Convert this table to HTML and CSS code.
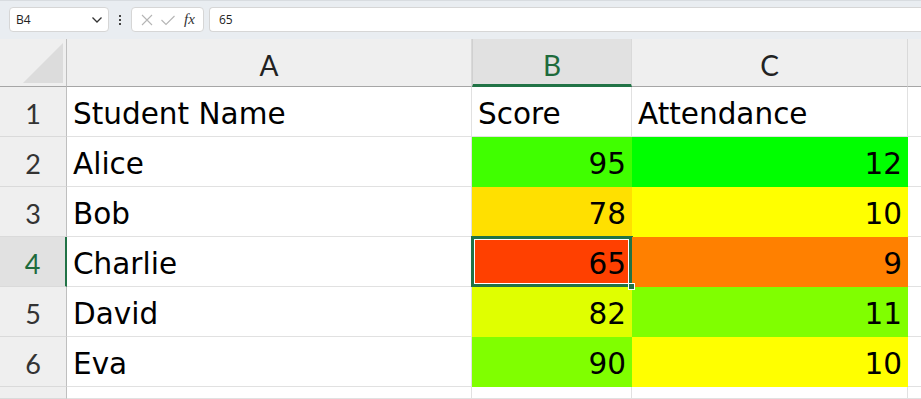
FILE: index.html
```html
<!DOCTYPE html>
<html>
<head>
<meta charset="utf-8">
<link rel="stylesheet" href="styles.css">
</head>
<body>
<div class="app">
  <div class="fbar">
    <div class="namebox">
      <span>B4</span>
      <svg class="chev" width="12" height="8" viewBox="0 0 12 8"><path d="M1.5 1.5 L6 6 L10.5 1.5" fill="none" stroke="#333" stroke-width="1.3"/></svg>
    </div>
    <div class="dots"><i></i><i></i><i></i></div>
    <div class="fxbox">
      <svg width="14" height="14" viewBox="0 0 14 14"><path d="M2 2 L12 12 M12 2 L2 12" stroke="#b5b5b5" stroke-width="1.1" fill="none"/></svg>
      <svg width="16" height="14" viewBox="0 0 16 14"><path d="M1.5 7 L6 11.5 L14.5 3" stroke="#b5b5b5" stroke-width="1.1" fill="none"/></svg>
      <span class="fx">fx</span>
    </div>
    <div class="input">65</div>
  </div>
  <div class="sheet">
    <div class="corner"><div class="tri"></div></div>
    <div class="ch">A</div>
    <div class="ch sel">B</div>
    <div class="ch">C</div>
    <div class="ch last"></div>

    <div class="rh">1</div>
    <div class="c">Student Name</div>
    <div class="c">Score</div>
    <div class="c">Attendance</div>
    <div class="c e"></div>

    <div class="rh">2</div>
    <div class="c">Alice</div>
    <div class="c n g1">95</div>
    <div class="c n g0">12</div>
    <div class="c e"></div>

    <div class="rh">3</div>
    <div class="c">Bob</div>
    <div class="c n y1">78</div>
    <div class="c n y0">10</div>
    <div class="c e"></div>

    <div class="rh sel">4</div>
    <div class="c">Charlie</div>
    <div class="c n r1 active">65<span class="handle"></span></div>
    <div class="c n o0">9</div>
    <div class="c e"></div>

    <div class="rh">5</div>
    <div class="c">David</div>
    <div class="c n l1">82</div>
    <div class="c n l0">11</div>
    <div class="c e"></div>

    <div class="rh">6</div>
    <div class="c">Eva</div>
    <div class="c n l0">90</div>
    <div class="c n y0">10</div>
    <div class="c e"></div>

    <div class="rh"></div>
    <div class="c"></div>
    <div class="c"></div>
    <div class="c"></div>
    <div class="c e"></div>
  </div>
</div>
</body>
</html>
```
FILE: styles.css
```css
* { box-sizing: border-box; }
html, body { margin: 0; padding: 0; background: #fff; }
body { width: 921px; height: 399px; overflow: hidden; font-family: "Open Sans", "Liberation Sans", sans-serif; }

.fbar {
  height: 39px;
  background: #e9edf1;
  border-top: 1px solid #d8dce0;
  display: flex;
  align-items: center;
  padding: 0 0 0 9px;
  font-family: "Open Sans", "Liberation Sans", sans-serif;
  font-size: 12px;
  color: #222;
}
.namebox {
  width: 100px; height: 25px;
  background: #fff;
  border: 1px solid #d6d6d6;
  border-radius: 4px;
  display: flex; align-items: center; justify-content: space-between;
  padding: 0 5px 0 6px;
  margin-top: -1px;
}
.dots { width: 22px; display: flex; flex-direction: column; align-items: center; gap: 2px; margin-top: -1px; }
.dots i { width: 2px; height: 2px; background: #444; display: block; }
.fxbox {
  width: 73px; height: 25px;
  background: #fff;
  border: 1px solid #d6d6d6;
  border-radius: 4px;
  display: flex; align-items: center;
  padding: 0 4px 0 8px; gap: 6px;
  margin-top: -1px;
}
.fx { font-family: "Liberation Serif", serif; font-style: italic; font-size: 15px; color: #333; margin-left: 2px; }
.input {
  flex: 1; height: 25px;
  margin-left: 5px;
  background: #fff;
  border: 1px solid #d6d6d6;
  border-right: none;
  border-radius: 4px 0 0 4px;
  display: flex; align-items: center;
  padding-left: 9px;
  margin-top: -1px;
}

.sheet {
  display: grid;
  grid-template-columns: 67px 405px 160px 276px 13px;
  grid-template-rows: 48px repeat(6, 50px) 12px;
}
.corner {
  background: #efefef;
  border-right: 1px solid #bfbfbf;
  border-bottom: 1px solid #a6a6a6;
  position: relative;
}
.tri {
  position: absolute; right: 3px; bottom: 3px;
  width: 40px; height: 40px;
  background: #dcdcdc;
  clip-path: polygon(100% 0, 100% 100%, 0 100%);
}
.ch {
  background: #efefef;
  border-right: 1px solid #d9d9d9;
  border-bottom: 1px solid #a6a6a6;
  display: flex; align-items: center; justify-content: center;
  font-family: "Lato", sans-serif;
  font-size: 28px; color: #222;
  padding-top: 5px;
}
.ch.sel { background: #e1e1e1; color: #1e6b3c; border-bottom: 3px solid #217346; border-left: 1px solid #d0d0d0; padding-top: 7px; }
.ch.last { border-right: none; }
.rh {
  background: #efefef;
  border-right: 1px solid #bfbfbf;
  border-bottom: 1px solid #dadada;
  display: flex; align-items: center; justify-content: center;
  font-family: "Lato", sans-serif;
  font-size: 27px; color: #333;
  padding-top: 3px;
}
.rh.sel { background: #e1e1e1; color: #1e6b3c; border-right: 2px solid #217346; }
.c {
  border-right: 1px solid #e1e1e1;
  border-bottom: 1px solid #e1e1e1;
  display: flex; align-items: center;
  padding: 4px 5px 0 6px;
  font-family: "DejaVu Sans", sans-serif;
  font-size: 29.5px; color: #000;
  position: relative;
}
.c.n { justify-content: flex-end; }
.c.e { border-right: none; }
.g1 { background: #40ff00; border-color: #40ff00; }
.g0 { background: #00ff00; border-color: #00ff00; }
.y1 { background: #ffe000; border-color: #ffe000; }
.y0 { background: #ffff00; border-color: #ffff00; }
.r1 { background: #ff4000; }
.o0 { background: #ff8000; border-color: #ff8000; }
.l1 { background: #e0ff00; border-color: #e0ff00; }
.l0 { background: #80ff00; border-color: #80ff00; }
.active {
  outline: 2px solid #217346;
  outline-offset: -1px;
  box-shadow: inset 0 0 0 2px #217346, inset 0 0 0 3px #fff;
  border-color: transparent;
}
.handle {
  position: absolute; right: -4px; bottom: -4px;
  width: 7px; height: 7px;
  background: #217346;
  border: 1px solid #fff;
  z-index: 2;
}
```
